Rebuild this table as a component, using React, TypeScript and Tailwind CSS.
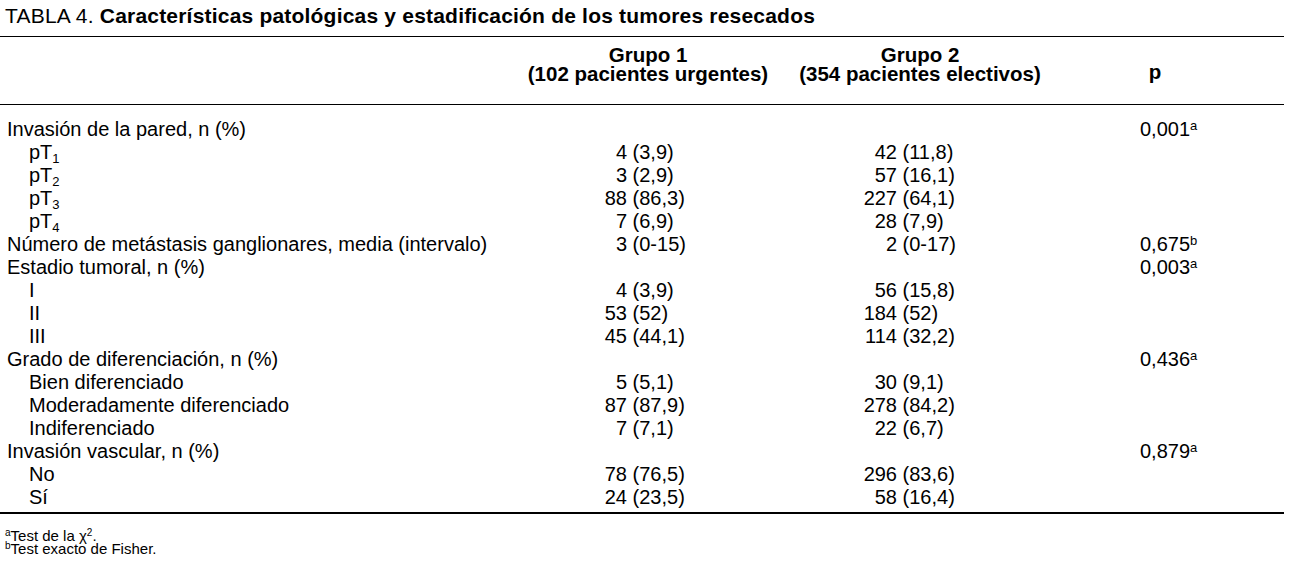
import React from "react";

type Row = {
  label: React.ReactNode;
  indent?: boolean;
  g1?: [string, string];
  g2?: [string, string];
  p?: string;
  sup?: string;
};

const Sub = ({ n }: { n: string }) => (
  <sub className="text-[13px] -bottom-[4px]">{n}</sub>
);

const rows: Row[] = [
  { label: "Invasión de la pared, n (%)", p: "0,001", sup: "a" },
  { label: <>pT<Sub n="1" /></>, indent: true, g1: ["4", "(3,9)"], g2: ["42", "(11,8)"] },
  { label: <>pT<Sub n="2" /></>, indent: true, g1: ["3", "(2,9)"], g2: ["57", "(16,1)"] },
  { label: <>pT<Sub n="3" /></>, indent: true, g1: ["88", "(86,3)"], g2: ["227", "(64,1)"] },
  { label: <>pT<Sub n="4" /></>, indent: true, g1: ["7", "(6,9)"], g2: ["28", "(7,9)"] },
  {
    label: "Número de metástasis ganglionares, media (intervalo)",
    g1: ["3", "(0-15)"],
    g2: ["2", "(0-17)"],
    p: "0,675",
    sup: "b",
  },
  { label: "Estadio tumoral, n (%)", p: "0,003", sup: "a" },
  { label: "I", indent: true, g1: ["4", "(3,9)"], g2: ["56", "(15,8)"] },
  { label: "II", indent: true, g1: ["53", "(52)"], g2: ["184", "(52)"] },
  { label: "III", indent: true, g1: ["45", "(44,1)"], g2: ["114", "(32,2)"] },
  { label: "Grado de diferenciación, n (%)", p: "0,436", sup: "a" },
  { label: "Bien diferenciado", indent: true, g1: ["5", "(5,1)"], g2: ["30", "(9,1)"] },
  { label: "Moderadamente diferenciado", indent: true, g1: ["87", "(87,9)"], g2: ["278", "(84,2)"] },
  { label: "Indiferenciado", indent: true, g1: ["7", "(7,1)"], g2: ["22", "(6,7)"] },
  { label: "Invasión vascular, n (%)", p: "0,879", sup: "a" },
  { label: "No", indent: true, g1: ["78", "(76,5)"], g2: ["296", "(83,6)"] },
  { label: "Sí", indent: true, g1: ["24", "(23,5)"], g2: ["58", "(16,4)"] },
];

function Value({ v }: { v?: [string, string] }) {
  if (!v) return null;
  return (
    <span className="whitespace-nowrap">
      <span className="inline-block w-[67px] text-right">{v[0]}</span> {v[1]}
    </span>
  );
}

export default function App() {
  return (
    <div className="w-[1295px] h-[566px] bg-white text-black font-['Liberation_Sans',Arial,sans-serif] overflow-hidden">
      <div className="w-[1284px]">
        {/* Title */}
        <div className="pl-[5px] pt-[4px] text-[21px] leading-[24px] tracking-[0.2px] whitespace-nowrap">
          TABLA 4. <span className="font-bold">Características patológicas y estadificación de los tumores resecados</span>
        </div>

        {/* Header */}
        <div className="mt-[8px] border-t border-black border-b h-[69px] flex items-start text-[20.5px] leading-[19px] font-bold">
          <div className="w-[508px]" />
          <div className="w-[280px] pt-[8px] flex flex-col items-center whitespace-nowrap">
            <span>Grupo 1</span>
            <span>(102 pacientes urgentes)</span>
          </div>
          <div className="w-[264px] pt-[8px] flex flex-col items-center whitespace-nowrap">
            <span>Grupo 2</span>
            <span>(354 pacientes electivos)</span>
          </div>
          <div className="w-[206px] pt-[25px] flex justify-center">p</div>
        </div>

        {/* Body */}
        <div className="pt-[13px] pb-[3px] border-b-2 border-black text-[20px] leading-[23px]">
          {rows.map((r, i) => (
            <div key={i} className="flex h-[23px] whitespace-nowrap">
              <div className={r.indent ? "w-[560px] pl-[29px]" : "w-[560px] pl-[7px]"}>{r.label}</div>
              <div className="w-[270px]">
                <Value v={r.g1} />
              </div>
              <div className="w-[310px]">
                <Value v={r.g2} />
              </div>
              <div className="flex-1">
                {r.p}
                {r.sup && <sup className="text-[13px]">{r.sup}</sup>}
              </div>
            </div>
          ))}
        </div>

        {/* Footnotes */}
        <div className="pt-[15px] pl-[5px] text-[15px] leading-[13px]">
          <div>
            <sup className="text-[10px]">a</sup>Test de la χ<sup className="text-[10px]">2</sup>.
          </div>
          <div>
            <sup className="text-[10px]">b</sup>Test exacto de Fisher.
          </div>
        </div>
      </div>
    </div>
  );
}
